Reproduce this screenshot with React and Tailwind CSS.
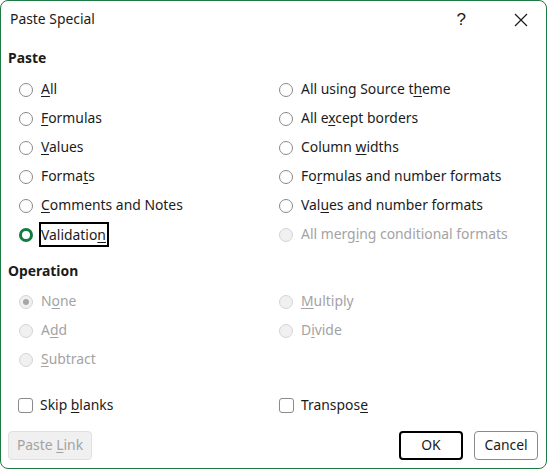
import React from 'react'

const font = { fontFamily: '"Noto Sans", "Liberation Sans", sans-serif' }

function Label({ text, u }) {
  // u = index of the access-key letter
  if (u === undefined || u < 0) return <span>{text}</span>
  return (
    <span>
      {text.slice(0, u)}
      <span className="underline underline-offset-2 decoration-1">{text[u]}</span>
      {text.slice(u + 1)}
    </span>
  )
}

function Radio({ text, u, state }) {
  // state: off | on | disabled | disabledOn
  const disabled = state === 'disabled' || state === 'disabledOn'
  return (
    <div className="flex h-[29px] items-center">
      {state === 'on' && (
        <span className="h-[14px] w-[14px] rounded-full border-[3.5px] border-[#107c41] bg-white" />
      )}
      {state === 'off' && (
        <span className="h-[14px] w-[14px] rounded-full border border-[#8a8a8a] bg-white" />
      )}
      {disabled && (
        <span className="flex h-[14px] w-[14px] items-center justify-center rounded-full border border-[#d4d4d4] bg-[#f0f0f0]">
          {state === 'disabledOn' && <span className="h-[6px] w-[6px] rounded-full bg-[#a6a6a6]" />}
        </span>
      )}
      {state === 'on' ? (
        <span className="ml-[6px] border-2 border-black pr-[1px] leading-[21px] text-[#1b1b1b]">
          <Label text={text} u={u} />
        </span>
      ) : (
        <span className={'ml-[8px] ' + (disabled ? 'text-[#a3a3a3]' : 'text-[#1b1b1b]')}>
          <Label text={text} u={u} />
        </span>
      )}
    </div>
  )
}

function Check({ text, u }) {
  return (
    <div className="flex h-[29px] items-center text-[#1b1b1b]">
      <span className="h-[15px] w-[15px] rounded-[3px] border border-[#8a8a8a] bg-white" />
      <span className="ml-[7px]">
        <Label text={text} u={u} />
      </span>
    </div>
  )
}

export default function App() {
  return (
    <div className="h-[469px] w-[547px] bg-white text-[13.9px]" style={font}>
      <div className="flex h-[469px] w-[547px] flex-col rounded-[8px] border border-[#1d7a43] bg-white">
        <div className="flex h-[37px] items-center pl-[9px] text-[#1b1b1b]">
          <span className="flex-1">Paste Special</span>
          <span className="mr-[48px] font-['Liberation_Sans'] text-[17px] leading-none">?</span>
          <svg width="14" height="14" viewBox="0 0 14 14" className="mr-[18px]">
            <path d="M1 1 L13 13 M13 1 L1 13" stroke="#1b1b1b" strokeWidth="1.2" fill="none" />
          </svg>
        </div>

        <div className="mt-[10px] flex h-[20px] items-center pl-[7px] font-bold text-[#1b1b1b]">Paste</div>
        <div className="mt-[7px] grid grid-cols-[260px_1fr] pl-[18px]">
          <Radio text="All" u={0} state="off" />
          <Radio text="All using Source theme" u={18} state="off" />
          <Radio text="Formulas" u={0} state="off" />
          <Radio text="All except borders" u={5} state="off" />
          <Radio text="Values" u={0} state="off" />
          <Radio text="Column widths" u={7} state="off" />
          <Radio text="Formats" u={5} state="off" />
          <Radio text="Formulas and number formats" u={2} state="off" />
          <Radio text="Comments and Notes" u={0} state="off" />
          <Radio text="Values and number formats" u={3} state="off" />
          <Radio text="Validation" u={9} state="on" />
          <Radio text="All merging conditional formats" u={8} state="disabled" />
        </div>

        <div className="mt-[12px] flex h-[20px] items-center pl-[7px] font-bold text-[#1b1b1b]">Operation</div>
        <div className="mt-[6px] grid grid-cols-[260px_1fr] pl-[18px]">
          <Radio text="None" u={1} state="disabledOn" />
          <Radio text="Multiply" u={0} state="disabled" />
          <Radio text="Add" u={1} state="disabled" />
          <Radio text="Divide" u={1} state="disabled" />
          <Radio text="Subtract" u={0} state="disabled" />
        </div>

        <div className="mt-[17px] grid grid-cols-[261px_1fr] pl-[17px]">
          <Check text="Skip blanks" u={5} />
          <Check text="Transpose" u={8} />
        </div>

        <div className="mt-[11px] flex items-center pl-[7px] pr-[8px]">
          <button className="h-[29px] w-[84px] rounded-[4px] border border-[#e0e0e0] bg-[#f0f0f0] text-[#a3a3a3]">
            <Label text="Paste Link" u={6} />
          </button>
          <div className="flex-1" />
          <button className="h-[29px] w-[64px] rounded-[4px] border-2 border-black bg-white text-[#1b1b1b]">OK</button>
          <button className="ml-[11px] h-[29px] w-[64px] rounded-[4px] border border-[#8a8a8a] bg-white text-[#1b1b1b]">
            Cancel
          </button>
        </div>
      </div>
    </div>
  )
}
